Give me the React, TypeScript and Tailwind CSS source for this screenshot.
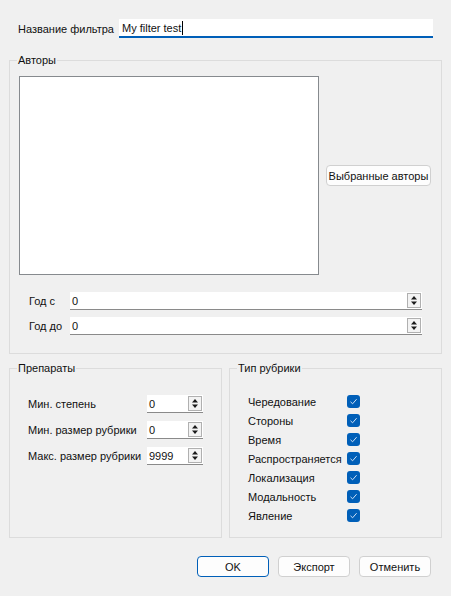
import React from "react";

const font = { fontFamily: '"Liberation Sans", Arial, sans-serif' };

const SpinArrows = () => (
  <div className="flex flex-col items-center justify-center w-[14px] h-[15px] border border-[#b0b0b0] bg-[#f3f3f3] shrink-0">
    <svg width="8" height="11" viewBox="0 0 8 11">
      <path d="M4 1 L7 4.5 L1 4.5 Z" fill="#1a1a1a" />
      <path d="M4 10 L7 6.5 L1 6.5 Z" fill="#1a1a1a" />
    </svg>
  </div>
);

const SpinBox: React.FC<{ value: string; width: string }> = ({ value, width }) => (
  <div
    className={`${width} h-[18px] shrink-0 bg-white border-b border-[#8a8a8a] flex items-center justify-between pl-[2px] pr-[1px]`}
  >
    <span className="text-[#111]">{value}</span>
    <SpinArrows />
  </div>
);

const Check = () => (
  <div className="w-[13px] h-[13px] shrink-0 rounded-[3px] bg-[#005fb8] flex items-center justify-center">
    <svg width="9" height="9" viewBox="0 0 9 9">
      <path d="M1.5 4.8 L3.6 6.8 L7.6 2.2" stroke="#cfe0f4" strokeWidth="1" fill="none" />
    </svg>
  </div>
);

const Group: React.FC<{ title: string; className?: string; children: React.ReactNode }> = ({
  title,
  className = "",
  children,
}) => (
  <fieldset className={`border border-[#dcdcdc] ${className}`}>
    <legend className="ml-[7px] px-[1px] leading-[16px] text-[#111]">{title}</legend>
    {children}
  </fieldset>
);

const Button: React.FC<{ label: string; primary?: boolean }> = ({ label, primary }) => (
  <button
    className={`w-[72px] h-[21px] rounded-[4px] bg-[#fdfdfd] text-[#111] border ${
      primary ? "border-[#005fb8]" : "border-[#d0d0d0]"
    }`}
  >
    {label}
  </button>
);

const checks = [
  "Чередование",
  "Стороны",
  "Время",
  "Распространяется",
  "Локализация",
  "Модальность",
  "Явление",
];

export default function App() {
  return (
    <div
      className="w-[451px] h-[596px] bg-[#f0f0f0] text-[#111] text-[11px] leading-[16px] whitespace-nowrap"
      style={font}
    >
      <div className="pt-[19px] px-[9px]">
        <div className="flex items-center pl-[9px]">
          <span className="w-[101px] shrink-0">Название фильтра</span>
          <div className="w-[314px] h-[19px] bg-white border-b-2 border-[#005fb8] flex items-center pl-[3px]">
            <span>My filter test</span>
            <span className="w-px h-[14px] bg-black ml-[1px]" />
          </div>
        </div>

        <Group title="Авторы" className="mt-[14px] w-[433px] pb-[18px]">
          <div className="flex items-center pl-[9px] pt-[8px]">
            <div className="w-[300px] h-[199px] bg-white border border-[#868a8e]" />
            <button className="ml-[7px] w-[105px] h-[21px] rounded-[4px] bg-[#fdfdfd] border border-[#d0d0d0]">
              Выбранные авторы
            </button>
          </div>
          <div className="flex items-center pl-[19px] mt-[17px]">
            <span className="w-[41px] shrink-0">Год с</span>
            <SpinBox value="0" width="w-[352px]" />
          </div>
          <div className="flex items-center pl-[19px] mt-[7px]">
            <span className="w-[41px] shrink-0">Год до</span>
            <SpinBox value="0" width="w-[352px]" />
          </div>
        </Group>

        <div className="flex gap-[7px] mt-[6px]">
          <Group title="Препараты" className="w-[213px] h-[178px]">
            <div className="flex flex-col gap-[8px] pl-[18px] pt-[19px]">
              {[
                ["Мин. степень", "0"],
                ["Мин. размер рубрики", "0"],
                ["Макс. размер рубрики", "9999"],
              ].map(([l, v]) => (
                <div key={l} className="flex items-center">
                  <span className="w-[119px] shrink-0">{l}</span>
                  <SpinBox value={v} width="w-[56px]" />
                </div>
              ))}
            </div>
          </Group>
          <Group title="Тип рубрики" className="w-[213px] h-[178px]">
            <div className="flex flex-col pl-[18px] pt-[16px]">
              {checks.map((c) => (
                <div key={c} className="flex items-center h-[19px]">
                  <span className="w-[99px] shrink-0">{c}</span>
                  <Check />
                </div>
              ))}
            </div>
          </Group>
        </div>

        <div className="flex justify-end gap-[9px] mt-[18px] pr-[11px]">
          <Button label="OK" primary />
          <Button label="Экспорт" />
          <Button label="Отменить" />
        </div>
      </div>
    </div>
  );
}
